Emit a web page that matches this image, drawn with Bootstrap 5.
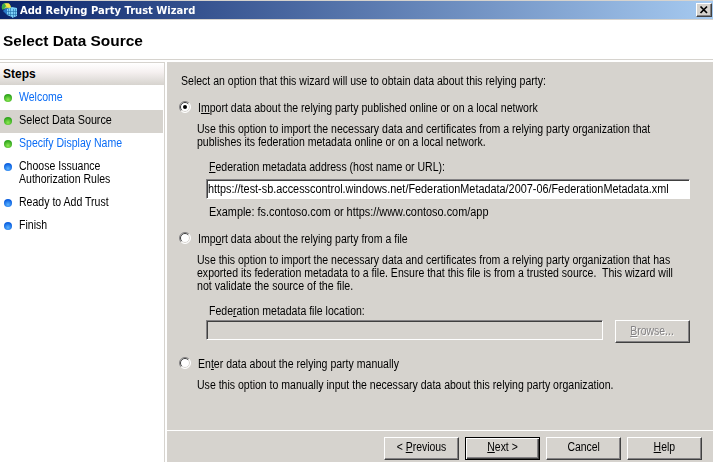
<!DOCTYPE html>
<html lang="en">
<head>
<meta charset="utf-8">
<title>Add Relying Party Trust Wizard</title>
<link href="https://cdn.jsdelivr.net/npm/bootstrap@5.3.0/dist/css/bootstrap.min.css" rel="stylesheet">
<style>
body{width:713px;height:462px;overflow:hidden;background:#d6d3ce;color:#000;font:12px/13px "Liberation Sans",Arial,sans-serif;white-space:nowrap}
u{text-underline-offset:1px;text-decoration-thickness:1px}
.titlebar{height:18px;margin-top:1px;background:linear-gradient(90deg,#0a246a,#a6caf0);color:#fff;font:bold 11px/17px "DejaVu Sans",sans-serif}
.title-text{margin-left:2px;transform:scaleX(.907);transform-origin:0 0}
.close-box{width:16px;height:14px;margin-right:1px;background:#d6d3ce;border:1px solid;border-color:#fff #404040 #404040 #fff;box-shadow:inset -1px -1px #848284}
.heading-band{height:39px;margin-top:1px;background:#fff;padding:13px 0 0 3px;font-size:14px;line-height:16px;font-weight:bold}
.head-text{display:inline-block;transform:scaleX(1.103);transform-origin:0 0}
.main-area{height:403px;border-top:1px solid #d6d3ce}
.gutter{background:#fff;padding-top:2px}
.steps{width:165px;border-right:1px solid #d6d3ce;background:#fff}
.steps-title{height:23px;padding:5px 0 0 3px;font-weight:bold;border-top:1px solid #d6d3ce;background:linear-gradient(#fff,#f6f1f1 40%,#d6d3ce)}
.step{display:flex;width:163px;min-height:23px;padding:4px 0 6px 4px}
.step svg{flex:none;margin:3px 7px 0 0}
.step.current{background:#d6d3ce}
.step.done{color:#0a6cf5}
.pane{width:546px;margin-left:2px;background:#d6d3ce}
.options{height:369px;padding:13px 0 0 14px;border-bottom:1px solid #fff}
.ln{display:block;height:13px}
.opt{display:flex;height:13px;margin-left:-2px}
.opt svg{flex:none;margin:-1px 7px 0 0}
.desc{margin-left:16px}
.sub{margin-left:28px}
.ln,.opt span,.step span,.url{transform:scaleX(.878);transform-origin:0 0}
.ln.wide-fit{transform:scaleX(.909)}
.ln.loose-fit{transform:scaleX(.887)}
.step.current span{transform:scaleX(.898)}
.url{display:block;transform:scaleX(.905)}
.sunken{height:20px;margin-left:25px;border:1px solid;border-color:#848284 #fff #fff #848284;box-shadow:inset 1px 1px #404040;padding:3px 0 0 1px}
.wbtn{width:75px;height:23px;padding:0 0 3px;border:1px solid;border-color:#fff #404040 #404040 #fff;border-radius:0;box-shadow:inset -1px -1px #848284;background:#d6d3ce;color:#000;font:inherit;text-align:center}
.wbtn span{display:inline-block;transform:scaleX(.87)}
.wbtn.primary-key{border-color:#000;box-shadow:inset 1px 1px #fff,inset -1px -1px #404040,inset -2px -2px #848284}
.wbtn.off{padding-bottom:1px;color:#848284;text-shadow:1px 1px #fff}
.t0{margin-top:14px}.t1{margin-top:14px}.t2{margin-top:8px}.t3{margin-top:12px}.t4{margin-top:5px}.t5{margin-top:7px}.t6{margin-top:2px}.t7{margin-top:15px}
.file-box{width:397px}.url-box{width:484px}
.footer-keys{gap:6px;padding:6px 0 0 217px}
</style>
</head>
<body>
<svg width="0" height="0" class="position-absolute"><defs>
<radialGradient id="g" cx=".5" cy=".7" r=".6"><stop offset="0" stop-color="#8eea52"/><stop offset="1" stop-color="#2fa51d"/></radialGradient>
<radialGradient id="b" cx=".5" cy=".7" r=".6"><stop offset="0" stop-color="#5cb4ff"/><stop offset="1" stop-color="#0a5fe0"/></radialGradient>
<g id="radio" fill="none"><circle cx="6" cy="6" r="5.200" fill="#fff"/><path d="M2.100 9.900A5.500 5.500 0 0 1 9.900 2.100" stroke="#848284"/><path d="M2.800 9.200A4.500 4.500 0 0 1 9.200 2.800" stroke="#404040"/><path d="M9.200 2.800A4.500 4.500 0 0 1 2.800 9.200" stroke="#d6d3ce"/><path d="M9.900 2.100A5.500 5.500 0 0 1 2.100 9.900" stroke="#fff"/></g>
</defs></svg>
<div class="titlebar d-flex align-items-center">
<svg width="18" height="18" viewBox="0 0 18 18"><path d="M2 8Q1 2 6 2Q11 2 11 7" fill="#b8d84a"/><path d="M2 8Q1 3 5 2.500L6 5L3 9Z" fill="#3cae48"/><path d="M5 3L9 2.500L11 7L7 6Z" fill="#ffe04a"/><path d="M3 10L6 7L8 8L7 14Z" fill="#2878c8"/><path d="M7 8L12 6V16L7 14ZM12 6L17 7V15L12 17Z" fill="#7cd0f8"/><path d="M8.500 8V14M10.500 7V15M13.500 8V16M15.500 8V15M7 10.500H17M7 13.500H17" stroke="#216ea9" stroke-width=".6"/></svg>
<span class="title-text">Add Relying Party Trust Wizard</span>
<span class="close-box ms-auto d-flex"><svg width="14" height="12"><path d="M3.500 2.500L10 9M10 2.500L3.500 9" stroke="#000" stroke-width="1.700"/></svg></span>
</div>
<div class="heading-band"><span class="head-text">Select Data Source</span></div>
<div class="main-area"><div class="gutter d-flex h-100">
<div class="steps">
<div class="steps-title">Steps</div>
<div class="steps-list" style="padding-top:2px">
<div class="step done"><svg width="8" height="8"><circle cx="4" cy="4" r="4" fill="url(#g)"/></svg><span>Welcome</span></div>
<div class="step current"><svg width="8" height="8"><circle cx="4" cy="4" r="4" fill="url(#g)"/></svg><span>Select Data Source</span></div>
<div class="step done"><svg width="8" height="8"><circle cx="4" cy="4" r="4" fill="url(#g)"/></svg><span>Specify Display Name</span></div>
<div class="step"><svg width="8" height="8"><circle cx="4" cy="4" r="4" fill="url(#b)"/></svg><span>Choose Issuance<br>Authorization Rules</span></div>
<div class="step"><svg width="8" height="8"><circle cx="4" cy="4" r="4" fill="url(#b)"/></svg><span>Ready to Add Trust</span></div>
<div class="step"><svg width="8" height="8"><circle cx="4" cy="4" r="4" fill="url(#b)"/></svg><span>Finish</span></div>
</div></div>
<div class="pane"><div class="options">
<span class="ln">Select an option that this wizard will use to obtain data about this relying party:</span>
<label class="opt t0"><svg width="12" height="12"><use href="#radio"/><circle cx="6" cy="6" r="2" fill="#000"/></svg><span>I<u>m</u>port data about the relying party published online or on a local network</span></label>
<div class="desc t2"><span class="ln">Use this option to import the necessary data and certificates from a relying party organization that</span><span class="ln">publishes its federation metadata online or on a local network.</span></div>
<span class="ln sub t3"><u>F</u>ederation metadata address (host name or URL):</span>
<div class="sunken bg-white t4 url-box"><span class="url">https://test-sb.accesscontrol.windows.net/FederationMetadata/2007-06/FederationMetadata.xml</span></div>
<span class="ln sub t5 wide-fit">Example: fs.contoso.com or https://www.contoso.com/app</span>
<label class="opt t1"><svg width="12" height="12"><use href="#radio"/></svg><span>Imp<u>o</u>rt data about the relying party from a file</span></label>
<div class="desc t2"><span class="ln">Use this option to import the necessary data and certificates from a relying party organization that has</span><span class="ln">exported its federation metadata to a file. Ensure that this file is from a trusted source.&nbsp; This wizard will</span><span class="ln loose-fit">not validate the source of the file.</span></div>
<span class="ln sub t3">Fede<u>r</u>ation metadata file location:</span>
<div class="d-flex t6"><div class="sunken file-box"></div><button class="wbtn off" style="margin-left:12px" disabled><span><u>B</u>rowse...</span></button></div>
<label class="opt t7"><svg width="12" height="12"><use href="#radio"/></svg><span>En<u>t</u>er data about the relying party manually</span></label>
<div class="desc t2"><span class="ln">Use this option to manually input the necessary data about this relying party organization.</span></div>
</div>
<div class="d-flex footer-keys"><button class="wbtn"><span>&lt; <u>P</u>revious</span></button><button class="wbtn primary-key"><span><u>N</u>ext &gt;</span></button><button class="wbtn"><span>Cancel</span></button><button class="wbtn"><span><u>H</u>elp</span></button></div>
</div>
</div></div>
<script src="https://cdn.jsdelivr.net/npm/bootstrap@5.3.0/dist/js/bootstrap.bundle.min.js"></script>
</body>
</html>
